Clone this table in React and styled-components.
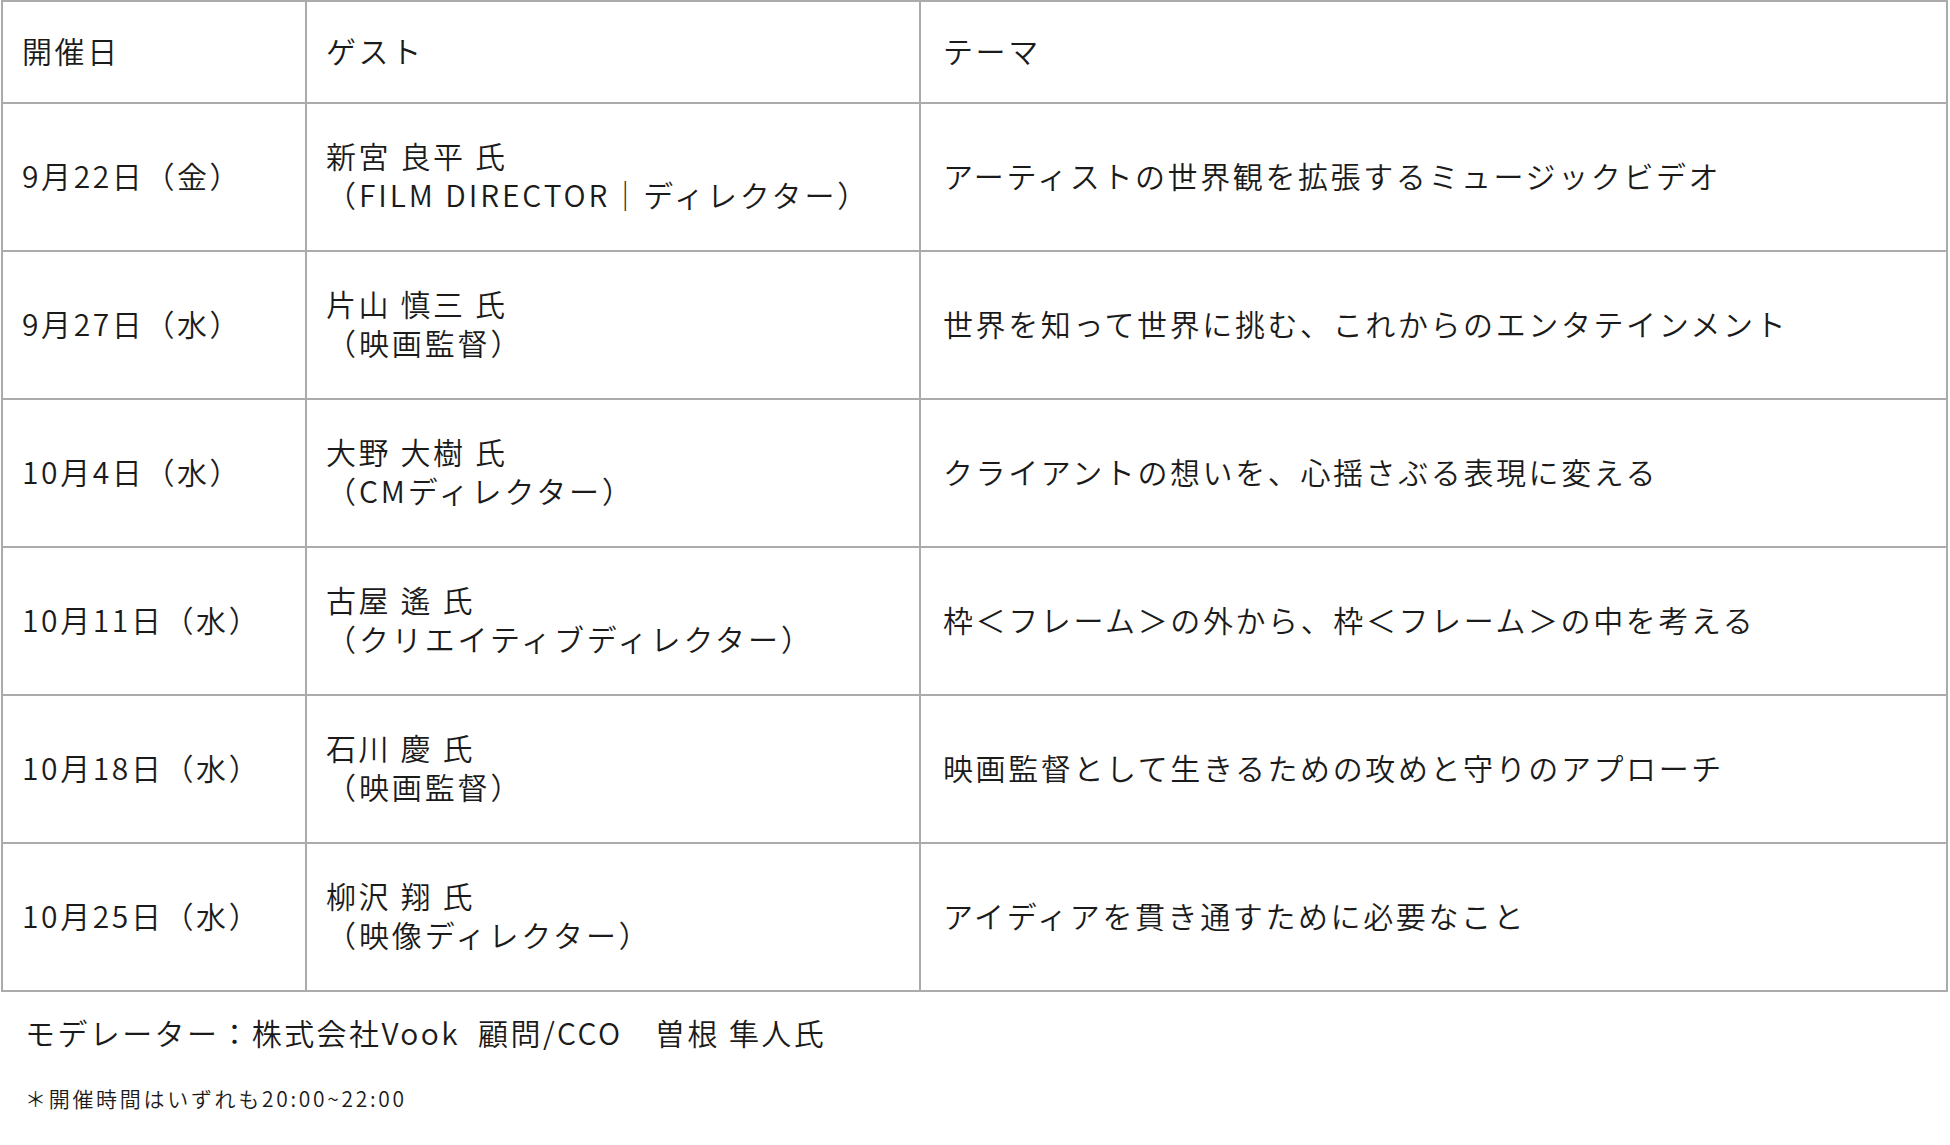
import React from "react";
import styled, { createGlobalStyle } from "styled-components";

const Global = createGlobalStyle`
  html, body { margin: 0; padding: 0; background: #ffffff; }
  body {
    font-family: "Noto Sans CJK JP", "Noto Sans", sans-serif;
    color: #1b1b1b;
  }
`;

const Page = styled.div`
  width: 1950px;
  padding: 0 0 0 1px;
  box-sizing: border-box;
`;

const Table = styled.div`
  display: grid;
  grid-template-columns: 304px 614px 1027px;
  grid-template-rows: 102px repeat(6, 148px);
  border-top: 2px solid #ababab;
  border-left: 2px solid #ababab;
  width: 1947px;
  box-sizing: border-box;
`;

const Cell = styled.div`
  box-sizing: border-box;
  border-right: 2px solid #ababab;
  border-bottom: 2px solid #ababab;
  padding: 0 0 5px ${(p) => (p.$col === 2 ? 22 : 19)}px;
  display: flex;
  flex-direction: column;
  justify-content: center;
  gap: 1px;
  font-size: 30px;
  font-weight: 350;
  line-height: 38px;
  letter-spacing: 2.6px;
  white-space: nowrap;
`;

const Line = styled.span`
  display: block;
  letter-spacing: ${(p) => (p.$sub ? 2.9 : 2.6)}px;
`;

const Footer = styled.div`
  padding: 21px 0 0 24px;
  display: flex;
  flex-direction: column;
`;

const Moderator = styled.div`
  font-size: 30px;
  font-weight: 350;
  line-height: 38px;
  letter-spacing: 2.4px;
  white-space: pre;
`;

const Note = styled.div`
  margin-top: 34px;
  font-size: 21px;
  font-weight: 350;
  line-height: 26px;
  letter-spacing: 2.7px;
`;

const rows = [
  {
    date: "9月22日（金）",
    guest: ["新宮 良平 氏", "（FILM DIRECTOR｜ディレクター）"],
    theme: "アーティストの世界観を拡張するミュージックビデオ",
  },
  {
    date: "9月27日（水）",
    guest: ["片山 慎三 氏", "（映画監督）"],
    theme: "世界を知って世界に挑む、これからのエンタテインメント",
  },
  {
    date: "10月4日（水）",
    guest: ["大野 大樹 氏", "（CMディレクター）"],
    theme: "クライアントの想いを、心揺さぶる表現に変える",
  },
  {
    date: "10月11日（水）",
    guest: ["古屋 遙 氏", "（クリエイティブディレクター）"],
    theme: "枠＜フレーム＞の外から、枠＜フレーム＞の中を考える",
  },
  {
    date: "10月18日（水）",
    guest: ["石川 慶 氏", "（映画監督）"],
    theme: "映画監督として生きるための攻めと守りのアプローチ",
  },
  {
    date: "10月25日（水）",
    guest: ["柳沢 翔 氏", "（映像ディレクター）"],
    theme: "アイディアを貫き通すために必要なこと",
  },
];

export default function App() {
  return (
    <Page>
      <Global />
      <Table>
        <Cell $col={0}>開催日</Cell>
        <Cell $col={1}>ゲスト</Cell>
        <Cell $col={2}>テーマ</Cell>
        {rows.map((r) => (
          <React.Fragment key={r.date}>
            <Cell $col={0}>{r.date}</Cell>
            <Cell $col={1}>
              <Line>{r.guest[0]}</Line>
              <Line $sub>{r.guest[1]}</Line>
            </Cell>
            <Cell $col={2}>{r.theme}</Cell>
          </React.Fragment>
        ))}
      </Table>
      <Footer>
        <Moderator>{"モデレーター：株式会社Vook  顧問/CCO　曽根 隼人氏"}</Moderator>
        <Note>＊開催時間はいずれも20:00~22:00</Note>
      </Footer>
    </Page>
  );
}
